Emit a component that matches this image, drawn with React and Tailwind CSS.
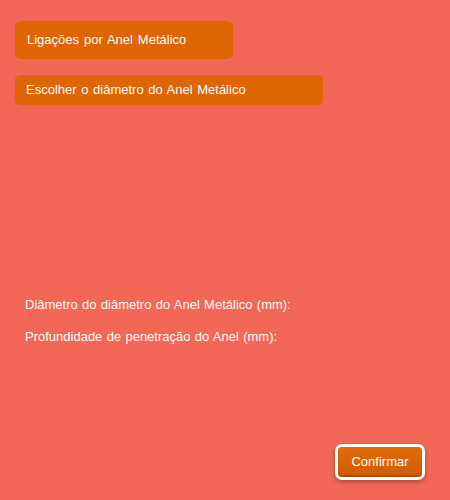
export default function App() {
  return (
    <div className="w-[450px] h-[500px] bg-[#f26755] relative font-['Liberation_Sans',Arial,sans-serif] text-white text-[13px]">
      <div className="flex flex-col items-start pl-[15px] pt-[21px]">
        <div className="w-[218px] h-[38px] rounded-[6px] bg-[#dd6503] flex items-center pl-[12px] [word-spacing:1.3px]">
          Ligações por Anel Metálico
        </div>
        <div className="mt-[16px] w-[308px] h-[30px] rounded-[5px] bg-[#dd6503] flex items-center pl-[11px] [word-spacing:1px]">
          Escolher o diâmetro do Anel Metálico
        </div>
      </div>
      <div className="flex flex-col pl-[25px] pt-[192px] gap-[17px] [word-spacing:0.7px]">
        <div className="leading-[15px]">Diâmetro do diâmetro do Anel Metálico (mm):</div>
        <div className="leading-[15px]">Profundidade de penetração do Anel (mm):</div>
      </div>
      <div className="absolute left-[335px] top-[444px] w-[90px] h-[36px] rounded-[7px] bg-white p-[3px] shadow-[0_2px_4px_rgba(0,0,0,0.3)]">
        <div className="w-full h-full rounded-[4px] bg-gradient-to-b from-[#e36b06] to-[#cf5c00] flex items-center justify-center shadow-[inset_0_-2px_2px_rgba(0,0,0,0.2)]">
          Confirmar
        </div>
      </div>
    </div>
  );
}
